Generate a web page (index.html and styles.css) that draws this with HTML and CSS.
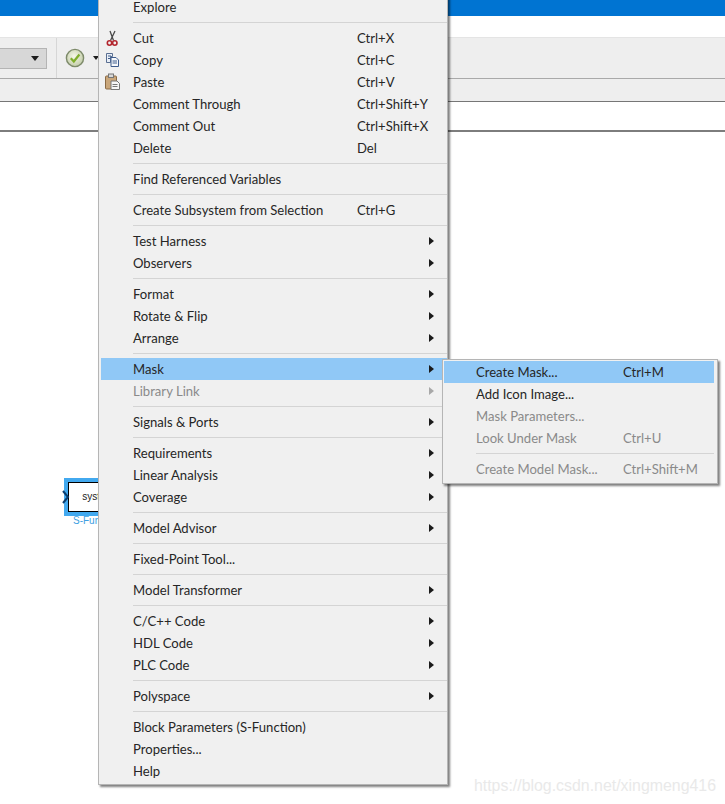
FILE: index.html
```html
<!DOCTYPE html>
<html lang="en">
<head>
<meta charset="utf-8">
<title>Simulink context menu</title>
<link rel="stylesheet" href="styles.css">
</head>
<body>
<div class="window">
  <div class="titlebar"></div>
  <div class="menubar"></div>
  <div class="toolbar">
    <div class="combo"><span class="combo-arrow"></span></div>
    <div class="tool-divider"></div>
    <svg class="check-icon" width="20" height="20" viewBox="0 0 20 20">
      <defs><radialGradient id="chk" cx="45%" cy="40%" r="60%"><stop offset="0" stop-color="#f6f7e8"/><stop offset="1" stop-color="#c3cdaa"/></radialGradient></defs>
      <circle cx="10" cy="10" r="8.6" fill="url(#chk)" stroke="#7d8a6a" stroke-width="1.4"/>
      <path d="M5.8 10.3l3 3.2 5.6-7" fill="none" stroke="#7fae2c" stroke-width="2.2"/>
    </svg>
    <span class="tool-arrow"></span>
  </div>
  <div class="tabbar"></div>
  <div class="breadcrumb"></div>
  <div class="canvas">
    <div class="block">
      <div class="block-body">system</div>
      <svg class="port" width="8" height="14" viewBox="0 0 8 14"><path d="M1 1l5 6-5 6" fill="none" stroke="#0b3d6e" stroke-width="2"/></svg>
      <div class="block-label">S-Function</div>
    </div>
    <div class="watermark">https://blog.csdn.net/xingmeng416</div>
  </div>
</div>

<div class="menu main-menu">
  <div class="item"><span class="label">Explore</span></div>
  <div class="sep"></div>
  <div class="item">
    <svg class="item-icon" width="18" height="18" viewBox="0 0 18 18"><path d="M11 2L6.500 11.500M6 2l3.500 9.500" fill="none" stroke="#4a4a4a" stroke-width="1.300"/><circle cx="5.500" cy="14" r="2.200" fill="none" stroke="#b3262e" stroke-width="1.600"/><circle cx="10.800" cy="14" r="2.200" fill="none" stroke="#b3262e" stroke-width="1.600"/></svg>
    <span class="label">Cut</span><span class="keys">Ctrl+X</span></div>
  <div class="item">
    <svg class="item-icon" width="18" height="18" viewBox="0 0 18 18"><path d="M2.500 2.500h6v3h-2v6h-4z" fill="#e8eef6" stroke="#5a6f92"/><path d="M7 6.500h5l2.500 2.500v6.500H7z" fill="#f6f8fb" stroke="#3f5c8c"/><path d="M8.500 10h4.500M8.500 12h4.500M4 5h3M4 7.500h2" stroke="#3f5c8c"/></svg>
    <span class="label">Copy</span><span class="keys">Ctrl+C</span></div>
  <div class="item">
    <svg class="item-icon" width="18" height="18" viewBox="0 0 18 18"><rect x="1.500" y="3" width="11" height="13" rx="1" fill="#c9a67a" stroke="#8a6a45"/><rect x="4.500" y="1" width="5" height="3.500" fill="#d9d9d9" stroke="#777"/><path d="M7 8h6l2.500 2.500v6H7z" fill="#f7f7f7" stroke="#777"/><path d="M8.500 11.500h5M8.500 13.500h5" stroke="#777"/></svg>
    <span class="label">Paste</span><span class="keys">Ctrl+V</span></div>
  <div class="item"><span class="label">Comment Through</span><span class="keys">Ctrl+Shift+Y</span></div>
  <div class="item"><span class="label">Comment Out</span><span class="keys">Ctrl+Shift+X</span></div>
  <div class="item"><span class="label">Delete</span><span class="keys">Del</span></div>
  <div class="sep"></div>
  <div class="item"><span class="label">Find Referenced Variables</span></div>
  <div class="sep"></div>
  <div class="item"><span class="label">Create Subsystem from Selection</span><span class="keys">Ctrl+G</span></div>
  <div class="sep"></div>
  <div class="item sub"><span class="label">Test Harness</span></div>
  <div class="item sub"><span class="label">Observers</span></div>
  <div class="sep"></div>
  <div class="item sub"><span class="label">Format</span></div>
  <div class="item sub"><span class="label">Rotate &amp; Flip</span></div>
  <div class="item sub"><span class="label">Arrange</span></div>
  <div class="sep"></div>
  <div class="item sub active"><span class="label">Mask</span></div>
  <div class="item sub disabled"><span class="label">Library Link</span></div>
  <div class="sep"></div>
  <div class="item sub"><span class="label">Signals &amp; Ports</span></div>
  <div class="sep"></div>
  <div class="item sub"><span class="label">Requirements</span></div>
  <div class="item sub"><span class="label">Linear Analysis</span></div>
  <div class="item sub"><span class="label">Coverage</span></div>
  <div class="sep"></div>
  <div class="item sub"><span class="label">Model Advisor</span></div>
  <div class="sep"></div>
  <div class="item"><span class="label">Fixed-Point Tool...</span></div>
  <div class="sep"></div>
  <div class="item sub"><span class="label">Model Transformer</span></div>
  <div class="sep"></div>
  <div class="item sub"><span class="label">C/C++ Code</span></div>
  <div class="item sub"><span class="label">HDL Code</span></div>
  <div class="item sub"><span class="label">PLC Code</span></div>
  <div class="sep"></div>
  <div class="item sub"><span class="label">Polyspace</span></div>
  <div class="sep"></div>
  <div class="item"><span class="label">Block Parameters (S-Function)</span></div>
  <div class="item"><span class="label">Properties...</span></div>
  <div class="item"><span class="label">Help</span></div>
</div>

<div class="menu sub-menu">
  <div class="item active"><span class="label">Create Mask...</span><span class="keys">Ctrl+M</span></div>
  <div class="item"><span class="label">Add Icon Image...</span></div>
  <div class="item disabled"><span class="label">Mask Parameters...</span></div>
  <div class="item disabled"><span class="label">Look Under Mask</span><span class="keys">Ctrl+U</span></div>
  <div class="sep"></div>
  <div class="item disabled"><span class="label">Create Model Mask...</span><span class="keys">Ctrl+Shift+M</span></div>
</div>
</body>
</html>
```
FILE: styles.css
```css
html, body {
  margin: 0;
  height: 100%;
  overflow: hidden;
  background: #fff;
}
body {
  position: relative;
  width: 725px;
  height: 804px;
  font-family: "Lato", "Noto Sans", sans-serif;
}
.window {
  display: flex;
  flex-direction: column;
  height: 804px;
}
.titlebar { height: 16px; background: #0074d2; }
.menubar { height: 21px; background: #fff; }
.toolbar {
  height: 40px;
  background: #eeeeee;
  border-top: 1px solid #e4e4e4;
  border-bottom: 1px solid #a9a9a9;
  display: flex;
  align-items: center;
}
.combo {
  width: 39px;
  height: 19px;
  background: #d7d7d7;
  border: 1px solid #b4b4b4;
  border-left: 0;
  display: flex;
  align-items: center;
  justify-content: flex-end;
  padding-right: 7px;
  margin-right: 3px;
}
.combo-arrow, .tool-arrow {
  width: 0;
  height: 0;
  border-left: 4px solid transparent;
  border-right: 4px solid transparent;
  border-top: 5px solid #1c1c1c;
}
.tool-divider {
  width: 1px;
  height: 40px;
  background: #d6d6d6;
  margin-left: 6px;
  margin-right: 8px;
}
.check-icon { margin-right: 8px; }
.tool-arrow { border-left-width: 3px; border-right-width: 3px; border-top-width: 4px; }
.tabbar {
  height: 22px;
  background: #eeeeee;
  border-bottom: 1px solid #767676;
}
.breadcrumb {
  height: 28px;
  background: #fff;
  border-bottom: 2px solid #7d7d7d;
}
.canvas {
  flex: 1;
  position: relative;
  background: #fff;
}
.block {
  position: absolute;
  left: 64px;
  top: 346px;
  width: 40px;
  height: 38px;
  background: #42a9ef;
}
.block-body {
  position: absolute;
  left: 4px;
  top: 4px;
  width: 58px;
  height: 28px;
  background: #fff;
  border: 1px solid #000;
  font: 10px/28px "Liberation Sans", sans-serif;
  color: #222;
  text-align: center;
}
.port { position: absolute; left: -2px; top: 12px; }
.block-label {
  position: absolute;
  left: 9px;
  top: 37px;
  font: 10px/12px "Liberation Sans", sans-serif;
  color: #3f9fe2;
  white-space: nowrap;
}
.watermark {
  position: absolute;
  right: 9px;
  top: 644px;
  font: 15.900px/20px "Liberation Sans", sans-serif;
  color: #e9e9e9;
  white-space: nowrap;
}
.menu {
  position: absolute;
  box-sizing: border-box;
  background: #f0f0f0;
  border: 1px solid #b5b5b5;
  box-shadow: 2px 2px 2px rgba(0, 0, 0, 0.5);
  font-size: 13.100px;
  color: #262626;
}
.main-menu {
  left: 98px;
  top: -5px;
  width: 350px;
  height: 790px;
  padding: 0 0 2px 2px;
}
.sub-menu {
  left: 442px;
  top: 359px;
  width: 276px;
  height: 125px;
  padding: 1px 3px 0 1px;
}
.item {
  position: relative;
  height: 22px;
  line-height: 22px;
  white-space: nowrap;
  display: flex;
}
.main-menu .item { padding-left: 32px; }
.main-menu .label { width: 224px; }
.sub-menu .item { padding-left: 32px; }
.sub-menu .label { width: 147px; }
.item-icon { position: absolute; left: 3px; top: 2px; }
.active { background: #90c8f6; }
.disabled { color: #8a8a8a; }
.sep {
  height: 1px;
  margin: 4px 0 4px 32px;
  background: #d4d4d4;
}
.sub::after {
  content: "";
  position: absolute;
  right: 13px;
  top: 7px;
  width: 0;
  height: 0;
  border-top: 4px solid transparent;
  border-bottom: 4px solid transparent;
  border-left: 5px solid #1a1a1a;
}
.sub.disabled::after { border-left-color: #a8a8a8; }
```
